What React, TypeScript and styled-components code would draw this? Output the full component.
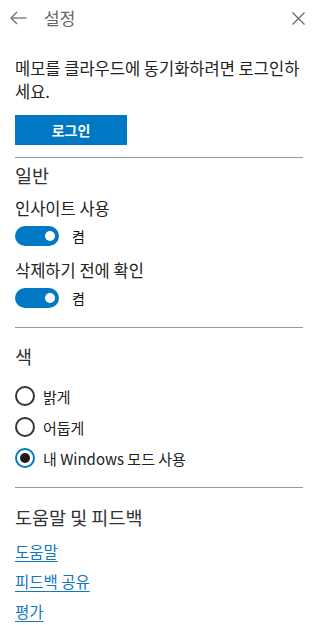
import React from "react";
import styled, { createGlobalStyle } from "styled-components";

const Global = createGlobalStyle`
  html, body { margin: 0; padding: 0; background: #fff; }
  body { font-family: "Noto Sans CJK KR", "Noto Sans", sans-serif; color: #1a1a1a; }
  * { box-sizing: border-box; }
`;

const Page = styled.div`
  width: 315px;
  height: 625px;
  overflow: hidden;
  background: #fff;
`;

const Header = styled.header`
  height: 36px;
  display: flex;
  align-items: center;
  padding: 0 10px;
`;

const IconButton = styled.button`
  background: none;
  border: none;
  padding: 0;
  display: flex;
  align-items: center;
  justify-content: center;
  color: #666;
  cursor: pointer;
`;

const Title = styled.div`
  margin-left: 17px;
  font-size: 17px;
  line-height: 20px;
  color: #666;
  flex: 1;
`;

const Content = styled.main`
  padding: 0 12px 0 15px;
`;

const Intro = styled.p`
  margin: 21px 0 0;
  font-size: 16.5px;
  line-height: 23px;
  color: #222;
`;

const PrimaryButton = styled.button`
  margin-top: 12px;
  width: 112px;
  height: 30px;
  border: none;
  background: #0078c4;
  color: #fff;
  font-family: inherit;
  font-size: 14px;
  font-weight: 700;
  cursor: pointer;
`;

const Divider = styled.hr<{ $top: number }>`
  border: none;
  border-top: 1px solid #999;
  margin: ${(p) => p.$top}px 0 0;
`;

const Heading = styled.h2<{ $top: number }>`
  margin: ${(p) => p.$top}px 0 0;
  font-size: 18.5px;
  line-height: 28px;
  font-weight: 400;
  color: #333;
`;

const Label = styled.div<{ $top: number }>`
  margin-top: ${(p) => p.$top}px;
  font-size: 16.5px;
  line-height: 23px;
  color: #222;
`;

const ToggleRow = styled.label`
  display: flex;
  align-items: center;
  gap: 13px;
  margin-top: 5px;
  height: 22px;
  font-size: 14px;
  color: #111;
`;

const Track = styled.span<{ $on: boolean }>`
  width: 44px;
  height: 20px;
  border-radius: 10px;
  background: ${(p) => (p.$on ? "#0078c4" : "#fff")};
  display: flex;
  align-items: center;
  justify-content: ${(p) => (p.$on ? "flex-end" : "flex-start")};
  padding: 0 4px;
`;

const Knob = styled.span`
  width: 10px;
  height: 10px;
  border-radius: 50%;
  background: #fff;
`;

const RadioList = styled.div`
  margin-top: 16px;
  display: flex;
  flex-direction: column;
  gap: 11px;
`;

const RadioRow = styled.label`
  display: flex;
  align-items: center;
  gap: 8px;
  height: 20px;
  font-size: 15px;
  color: #222;
`;

const RadioCircle = styled.span<{ $checked: boolean }>`
  width: 20px;
  height: 20px;
  border-radius: 50%;
  border: 2px solid ${(p) => (p.$checked ? "#0078c4" : "#333")};
  display: flex;
  align-items: center;
  justify-content: center;
  flex-shrink: 0;
`;

const RadioDot = styled.span`
  width: 10px;
  height: 10px;
  border-radius: 50%;
  background: #1a1a1a;
`;

const Links = styled.div`
  margin-top: 9px;
  display: flex;
  flex-direction: column;
  gap: 8px;
`;

const Link = styled.a`
  align-self: flex-start;
  font-size: 15.5px;
  line-height: 22px;
  color: #1178c4;
  text-decoration: underline;
  text-underline-offset: 3px;
  cursor: pointer;
`;

function Toggle({ on, text }: { on: boolean; text: string }) {
  return (
    <ToggleRow>
      <Track $on={on}>
        <Knob />
      </Track>
      {text}
    </ToggleRow>
  );
}

function Radio({ checked, text }: { checked?: boolean; text: string }) {
  return (
    <RadioRow>
      <RadioCircle $checked={!!checked}>{checked && <RadioDot />}</RadioCircle>
      {text}
    </RadioRow>
  );
}

export default function App() {
  return (
    <Page>
      <Global />
      <Header>
        <IconButton aria-label="back">
          <svg width="17" height="14" viewBox="0 0 17 14" fill="none" stroke="#666" strokeWidth="1.2">
            <path d="M16.5 7H1" />
            <path d="M7 1L1 7l6 6" />
          </svg>
        </IconButton>
        <Title>설정</Title>
        <IconButton aria-label="close">
          <svg width="13" height="13" viewBox="0 0 13 13" fill="none" stroke="#666" strokeWidth="1.2">
            <path d="M0.5 0.5l12 12M12.5 0.5l-12 12" />
          </svg>
        </IconButton>
      </Header>
      <Content>
        <Intro>메모를 클라우드에 동기화하려면 로그인하세요.</Intro>
        <PrimaryButton>로그인</PrimaryButton>
        <Divider $top={12} />
        <Heading $top={3}>일반</Heading>
        <Label $top={8}>인사이트 사용</Label>
        <Toggle on text="켬" />
        <Label $top={12}>삭제하기 전에 확인</Label>
        <Toggle on text="켬" />
        <Divider $top={18} />
        <Heading $top={14}>색</Heading>
        <RadioList>
          <Radio text="밝게" />
          <Radio text="어둡게" />
          <Radio checked text="내 Windows 모드 사용" />
        </RadioList>
        <Divider $top={19} />
        <Heading $top={15}>도움말 및 피드백</Heading>
        <Links>
          <Link>도움말</Link>
          <Link>피드백 공유</Link>
          <Link>평가</Link>
        </Links>
      </Content>
    </Page>
  );
}
